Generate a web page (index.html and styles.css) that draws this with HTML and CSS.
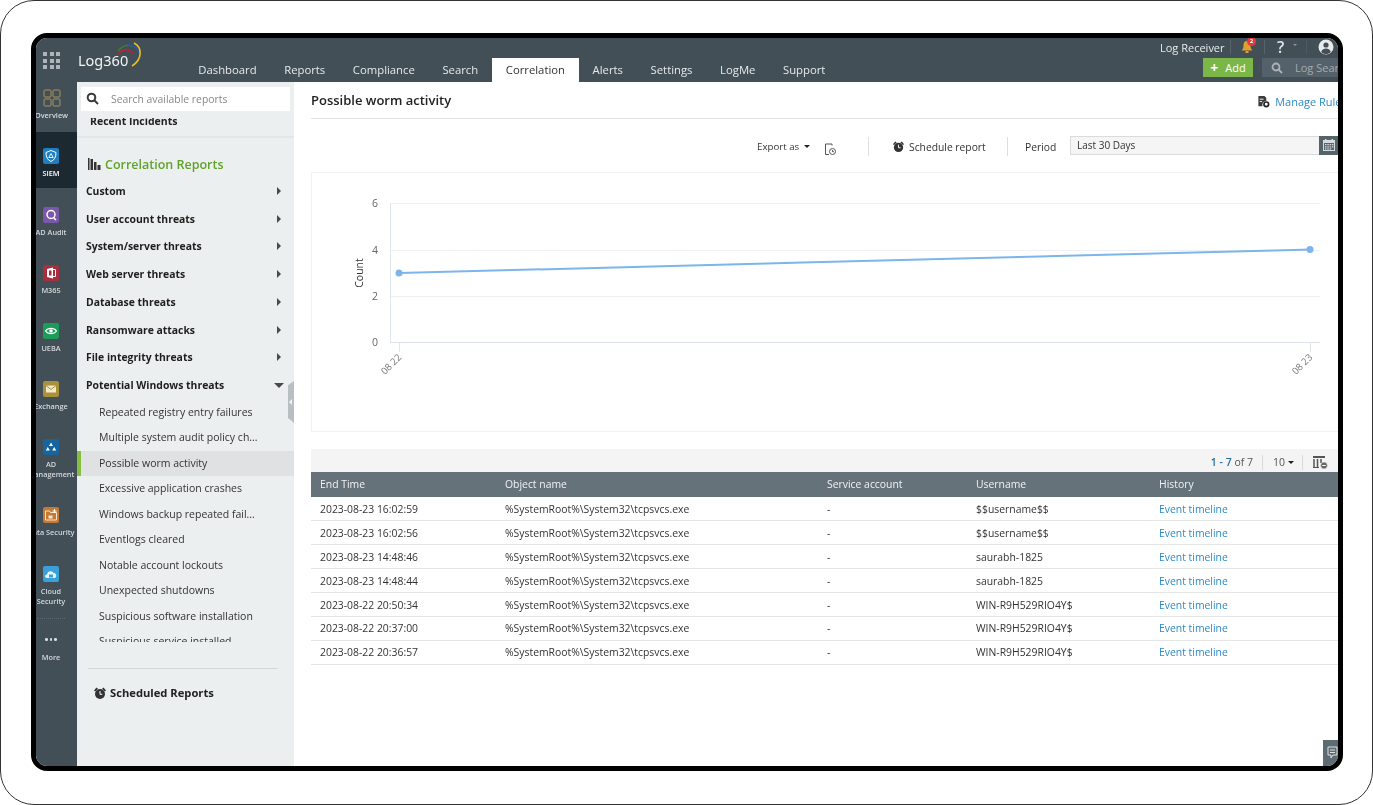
FILE: index.html
```html
<!DOCTYPE html>
<html lang="en">
<head>
<meta charset="utf-8">
<title>Log360 - Possible worm activity</title>
<link rel="stylesheet" href="styles.css">
</head>
<body>
<div class="frame">
  <div class="device">
    <header class="topbar">
      <div class="apps"><i></i><i></i><i></i><i></i><i></i><i></i><i></i><i></i><i></i></div>
      <div class="logo">
        <span class="logo-text">Log360</span>
        <svg class="logo-arcs" viewBox="0 0 30 26" width="30" height="26" fill="none">
          <path d="M2 13C6 7 13 6 19 12" stroke="#c8202c" stroke-width="1.3"/>
          <path d="M3 9C8 3 14 2 20 5" stroke="#2f8a3c" stroke-width="1.3"/>
          <path d="M13 3C18 3 22 6 24 11" stroke="#2a55a8" stroke-width="1.3"/>
          <path d="M19 1C27 5 28 17 17 24" stroke="#e8c020" stroke-width="1.6"/>
        </svg>
      </div>
      <nav class="nav">
        <a>Dashboard</a><a>Reports</a><a>Compliance</a><a>Search</a><a class="active">Correlation</a><a>Alerts</a><a>Settings</a><a>LogMe</a><a>Support</a>
      </nav>
      <div class="top-right">
        <div class="util">
          <span class="receiver">Log Receiver</span>
          <span class="vsep"></span>
          <span class="bell">
            <svg viewBox="0 0 14 14" width="14" height="14"><path d="M7 1C4 1 3.500 3.500 3.500 6C3.500 8.500 2.500 9.500 1.500 10.500H12.500C11.500 9.500 10.500 8.500 10.500 6C10.500 3.500 10 1 7 1Z" fill="#e0a030"/><rect x="5.500" y="11" width="3" height="2" fill="#e0a030"/></svg>
            <b class="badge">2</b>
          </span>
          <span class="vsep"></span>
          <span class="help">?</span>
          <span class="mini-caret"></span>
          <span class="vsep faint"></span>
          <svg class="user" viewBox="0 0 16 16" width="16" height="16"><circle cx="8" cy="8" r="7.500" fill="#e8eaeb"/><circle cx="8" cy="6" r="2.600" fill="#434f57"/><path d="M3.200 13C4 10.200 6 9.500 8 9.500S12 10.200 12.800 13C11.500 14.400 9.800 15 8 15S4.500 14.400 3.200 13Z" fill="#434f57"/></svg>
        </div>
        <div class="actions">
          <button class="add"><span class="plus">+</span>Add</button>
          <div class="logsearch">
            <svg viewBox="0 0 12 12" width="12" height="12" fill="none" stroke="#aab2b7" stroke-width="1.800"><circle cx="5" cy="5" r="3.500"/><path d="M7.500 7.500L11 11"/></svg>
            <span>Log Search</span>
          </div>
        </div>
      </div>
    </header>

    <div class="body">
      <aside class="rail">
        <div class="rail-item first">
          <svg class="ricon" viewBox="0 0 18 18" fill="none" stroke="#a8935f" stroke-width="1"><rect x="1" y="1" width="7" height="7" rx="1"/><rect x="10" y="1" width="7" height="7" rx="1"/><rect x="1" y="10" width="7" height="7" rx="1"/><rect x="10" y="10" width="7" height="7" rx="1"/></svg>
          <span>Overview</span>
        </div>
        <div class="rail-item current">
          <svg class="ricon" viewBox="0 0 16 16"><rect width="16" height="16" rx="2" fill="#1f7fc0"/><path d="M8 2.500L13 4.500C13 9 11.500 12 8 13.500C4.500 12 3 9 3 4.500Z" fill="none" stroke="#fff" stroke-width="1"/><path d="M8 5.500L10.200 9.500H5.800Z" fill="none" stroke="#fff" stroke-width=".9"/></svg>
          <span>SIEM</span>
        </div>
        <div class="rail-item">
          <svg class="ricon" viewBox="0 0 16 16"><rect width="16" height="16" rx="2" fill="#7a57a8"/><circle cx="8" cy="7.500" r="4" fill="none" stroke="#fff" stroke-width="1.500"/><path d="M10.500 10.500L13 13" stroke="#fff" stroke-width="1.500"/></svg>
          <span>AD Audit</span>
        </div>
        <div class="rail-item">
          <svg class="ricon" viewBox="0 0 16 16"><rect width="16" height="16" rx="2" fill="#a82f3e"/><path d="M4 4L10 2.500V13.500L4 12Z" fill="#fff"/><path d="M10 4.500H12.500V11.500H10" fill="none" stroke="#fff"/><rect x="6" y="5.500" width="2.500" height="5" fill="#a82f3e"/></svg>
          <span>M365</span>
        </div>
        <div class="rail-item">
          <svg class="ricon" viewBox="0 0 16 16"><rect width="16" height="16" rx="2" fill="#1c9c58"/><path d="M2.500 8C5 4.500 11 4.500 13.500 8C11 11.500 5 11.500 2.500 8Z" fill="none" stroke="#fff" stroke-width="1.100"/><circle cx="8" cy="8" r="1.800" fill="#fff"/></svg>
          <span>UEBA</span>
        </div>
        <div class="rail-item">
          <svg class="ricon" viewBox="0 0 16 16"><rect width="16" height="16" rx="2" fill="#a8913a"/><rect x="3" y="4.500" width="10" height="7" fill="#f1e9c8"/><path d="M3 4.500L8 8.500L13 4.500" fill="none" stroke="#a8913a"/></svg>
          <span>Exchange</span>
        </div>
        <div class="rail-item tall">
          <svg class="ricon" viewBox="0 0 16 16"><rect width="16" height="16" rx="2" fill="#17659c"/><path d="M8 3.500L10 7H6ZM4.800 8L6.800 11.500H2.800ZM11.200 8L13.200 11.500H9.200Z" fill="#fff"/></svg>
          <span>AD<br>Management</span>
        </div>
        <div class="rail-item data">
          <svg class="ricon" viewBox="0 0 16 16"><rect width="16" height="16" rx="2" fill="#c47a35"/><path d="M2.500 4H6.500L7.500 5.500H13.500V13H2.500Z" fill="none" stroke="#f6e3cc"/><rect x="5.500" y="8.500" width="4" height="3" fill="#f6e3cc"/><path d="M11.500 2V6M9.500 4H13.500" stroke="#fff"/></svg>
          <span>Data Security</span>
        </div>
        <div class="rail-item tall">
          <svg class="ricon" viewBox="0 0 16 16"><rect width="16" height="16" rx="2" fill="#3b9fd8"/><path d="M4 12C1.500 12 1.500 8.500 4 8.500C4.300 5 9 4 10.500 7C13.500 6.500 14.500 12 11.500 12Z" fill="#e6f4fc"/><rect x="6" y="8.500" width="4" height="3" fill="#3b9fd8"/></svg>
          <span>Cloud<br>Security</span>
        </div>
        <div class="rail-item more">
          <div class="dots"><i></i><i></i><i></i></div>
          <span>More</span>
        </div>
      </aside>

      <aside class="side">
        <div class="side-search">
          <svg viewBox="0 0 14 14" width="14" height="14" fill="none" stroke="#3a3a3a" stroke-width="2"><circle cx="5.500" cy="5.500" r="3.800"/><path d="M8.500 8.500L12 12"/></svg>
          <span>Search available reports</span>
        </div>
        <div class="side-scroll">
          <div class="recent">Recent Incidents</div>
          <h3 class="side-title">
            <svg viewBox="0 0 13 12" width="13" height="12" fill="#333"><rect x="0" y="0" width="1.500" height="12"/><rect x="2.500" y="1" width="2.500" height="11"/><rect x="6" y="4" width="2.500" height="8"/><rect x="9.500" y="7" width="3" height="5"/></svg>
            Correlation Reports
          </h3>
          <ul class="groups">
            <li>Custom</li>
            <li>User account threats</li>
            <li>System/server threats</li>
            <li>Web server threats</li>
            <li>Database threats</li>
            <li>Ransomware attacks</li>
            <li>File integrity threats</li>
            <li class="open">Potential Windows threats</li>
          </ul>
          <ul class="reports">
            <li>Repeated registry entry failures</li>
            <li>Multiple system audit policy ch...</li>
            <li class="selected">Possible worm activity</li>
            <li>Excessive application crashes</li>
            <li>Windows backup repeated fail...</li>
            <li>Eventlogs cleared</li>
            <li>Notable account lockouts</li>
            <li>Unexpected shutdowns</li>
            <li>Suspicious software installation</li>
            <li>Suspicious service installed</li>
          </ul>
        </div>
        <div class="scheduled">
          <svg viewBox="0 0 14 14" width="14" height="14"><use href="#alarm"/></svg>
          Scheduled Reports
        </div>
        <span class="handle"></span>
      </aside>

      <main class="main">
        <div class="title-row">
          <h1>Possible worm activity</h1>
          <a class="manage">
            <svg viewBox="0 0 14 14" width="13" height="13"><path d="M1.500 1H8L10 3V6.500A4 4 0 0 0 6 12H1.500Z" fill="#3c3c3c"/><rect x="3" y="4" width="4" height="1" fill="#fff"/><rect x="3" y="6.500" width="2.500" height="1" fill="#fff"/><circle cx="10" cy="10" r="2.500" fill="none" stroke="#222" stroke-width="1.800"/></svg>
            Manage Rules
          </a>
        </div>
        <div class="tools">
          <span class="export">Export as<i class="caret"></i></span>
          <svg class="history" viewBox="0 0 13 13" width="13" height="13" fill="none" stroke="#555"><path d="M8 2.500V1H1.500V11.500H5"/><circle cx="8.500" cy="8.500" r="3"/><path d="M8.500 7V8.700H10"/></svg>
          <span class="tsep"></span>
          <span class="sched">
            <svg viewBox="0 0 14 14" width="13" height="13"><use href="#alarm"/></svg>
            Schedule report
          </span>
          <span class="tsep"></span>
          <span class="period">Period</span>
          <div class="period-box">
            <span>Last 30 Days</span>
            <span class="cal">
              <svg viewBox="0 0 14 14" width="14" height="14" fill="#d6dbde"><rect x="1" y="2" width="12" height="11"/><rect x="3" y="1" width="1.500" height="2.500"/><rect x="9.500" y="1" width="1.500" height="2.500"/><path d="M2 5H12V12H2Z" fill="#55636b"/><path d="M3 6h1.500v1.300H3zM5.300 6h1.500v1.300H5.300zM7.600 6h1.500v1.300H7.600zM9.900 6h1.500v1.300H9.900zM3 8.200h1.500v1.300H3zM5.300 8.200h1.500v1.300H5.300zM7.600 8.200h1.500v1.300H7.600zM9.900 8.200h1.500v1.300H9.900zM3 10.300h1.500v1.300H3zM5.300 10.300h1.500v1.300H5.300zM7.600 10.300h1.500v1.300H7.600z"/></svg>
            </span>
          </div>
        </div>

        <section class="chart">
          <svg viewBox="311 172 1040 259" width="1040" height="259">
            <g stroke="#eef0f3" stroke-width="1">
              <path d="M390 203.500H1320M390 250.500H1320M390 296.500H1320"/>
            </g>
            <path d="M390.500 203V342" stroke="#dfe6ef" stroke-width="1"/>
            <path d="M390 342.500H1320" stroke="#dde2e9" stroke-width="1"/>
            <path d="M399.500 343V352M1310.500 343V352" stroke="#dfe6ef"/>
            <path d="M399 273L1310 249.500" stroke="#7cb5ec" stroke-width="2" fill="none"/>
            <circle cx="399" cy="273" r="3.500" fill="#7cb5ec"/>
            <circle cx="1310" cy="249.500" r="3.500" fill="#7cb5ec"/>
            <g class="ylabels">
              <text x="378" y="207">6</text>
              <text x="378" y="254">4</text>
              <text x="378" y="300">2</text>
              <text x="378" y="346">0</text>
            </g>
            <text class="ytitle" transform="translate(363 273) rotate(-90)">Count</text>
            <text class="xlabel" transform="translate(402 358) rotate(-45)">08 22</text>
            <text class="xlabel" transform="translate(1313 358) rotate(-45)">08 23</text>
          </svg>
        </section>

        <div class="pager">
          <span class="count"><b>1 - 7</b> of 7</span>
          <span class="psep first"></span>
          <span class="size">10<i class="caret"></i></span>
          <span class="psep last"></span>
          <svg viewBox="0 0 15 13" width="15" height="13"><rect x="0" y="0" width="12" height="2" fill="#555"/><path d="M1 3V11M4.500 3V11M8 3V7" stroke="#555" stroke-width="1.500"/><path d="M0 11.500H6" stroke="#555"/><circle cx="11" cy="9.500" r="3.400" fill="#666" stroke="#f4f4f4" stroke-width=".6"/><path d="M9.300 9.500H12.700" stroke="#fff"/></svg>
        </div>

        <table class="grid">
          <colgroup><col class="c1"><col class="c2"><col class="c3"><col class="c4"><col class="c5"></colgroup>
          <thead>
            <tr><th>End Time</th><th>Object name</th><th>Service account</th><th>Username</th><th>History</th></tr>
          </thead>
          <tbody>
            <tr><td>2023-08-23 16:02:59</td><td>%SystemRoot%\System32\tcpsvcs.exe</td><td>-</td><td>$$username$$</td><td><a>Event timeline</a></td></tr>
            <tr><td>2023-08-23 16:02:56</td><td>%SystemRoot%\System32\tcpsvcs.exe</td><td>-</td><td>$$username$$</td><td><a>Event timeline</a></td></tr>
            <tr><td>2023-08-23 14:48:46</td><td>%SystemRoot%\System32\tcpsvcs.exe</td><td>-</td><td>saurabh-1825</td><td><a>Event timeline</a></td></tr>
            <tr><td>2023-08-23 14:48:44</td><td>%SystemRoot%\System32\tcpsvcs.exe</td><td>-</td><td>saurabh-1825</td><td><a>Event timeline</a></td></tr>
            <tr><td>2023-08-22 20:50:34</td><td>%SystemRoot%\System32\tcpsvcs.exe</td><td>-</td><td>WIN-R9H529RIO4Y$</td><td><a>Event timeline</a></td></tr>
            <tr><td>2023-08-22 20:37:00</td><td>%SystemRoot%\System32\tcpsvcs.exe</td><td>-</td><td>WIN-R9H529RIO4Y$</td><td><a>Event timeline</a></td></tr>
            <tr><td>2023-08-22 20:36:57</td><td>%SystemRoot%\System32\tcpsvcs.exe</td><td>-</td><td>WIN-R9H529RIO4Y$</td><td><a>Event timeline</a></td></tr>
          </tbody>
        </table>

        <div class="feedback">
          <svg viewBox="0 0 12 14" width="12" height="14" fill="none" stroke="#dfe3e5"><path d="M1 1H10V9H6L4 12V9H1Z"/><path d="M3 4H8M3 6.500H8"/></svg>
        </div>
      </main>
    </div>
  </div>
</div>
<svg class="defs" width="0" height="0">
  <symbol id="alarm" viewBox="0 0 14 14">
    <circle cx="7" cy="8" r="5" fill="#333"/>
    <path d="M1 4.500L3.500 1.500L5 2.800L2.200 5.500ZM13 4.500L10.500 1.500L9 2.800L11.800 5.500Z" fill="#333"/>
    <path d="M7 5V8.300H9.300" fill="none" stroke="#fff"/>
  </symbol>
</svg>
</body>
</html>
```
FILE: styles.css
```css
* { box-sizing: border-box; }
html, body { margin: 0; padding: 0; }
body {
  width: 1373px;
  height: 805px;
  overflow: hidden;
  background: #fff;
  font-family: "Open Sans", "Liberation Sans", sans-serif;
  color: #222;
}
.defs { position: absolute; }
.frame {
  width: 1373px;
  height: 805px;
  border: 1px solid #333;
  border-radius: 34px;
  padding: 32px 29px 33px 30px;
}
.device {
  width: 1312px;
  height: 738px;
  border: 5px solid #000;
  border-radius: 16px;
  overflow: hidden;
  display: flex;
  flex-direction: column;
  background: #fff;
  filter: blur(0.3px);
}

/* top bar */
.topbar {
  height: 44px;
  flex: none;
  background: #434f57;
  display: flex;
  position: relative;
}
.apps {
  width: 17px;
  height: 17px;
  margin: 14px 0 0 7px;
  display: grid;
  grid-template-columns: repeat(3, 4px);
  grid-template-rows: repeat(3, 4px);
  gap: 2.5px;
}
.apps i { background: #aeb5ba; }
.logo {
  width: 117px;
  margin-left: 18px;
  flex: none;
  position: relative;
  padding-top: 11px;
}
.logo-text { color: #f2f4f5; font-size: 14.500px; line-height: 20px; font-family: "Noto Sans", sans-serif; }
.logo-arcs { position: absolute; left: 37px; top: 4px; }
.nav {
  display: flex;
  align-items: flex-end;
  height: 44px;
  margin-left: -10.500px;
}
.nav a {
  height: 24px;
  padding: 0 13.800px;
  color: #e6e9ea;
  font-size: 11.300px;
  line-height: 24px;
  white-space: nowrap;
}
.nav a.active { background: #fff; color: #333; }
.top-right {
  margin-left: auto;
  width: 198px;
  flex: none;
  display: flex;
  flex-direction: column;
}
.util {
  height: 18px;
  display: flex;
  align-items: center;
  color: #e8eaeb;
  font-size: 11px;
}
.receiver { margin-left: 20px; white-space: nowrap; width: 61px; }
.vsep { width: 1px; height: 14px; background: #58646c; margin-left: 9px; }
.vsep.faint { margin-left: 9px; background: #4e5a62; }
.bell { position: relative; margin-left: 9px; width: 15px; height: 14px; }
.badge {
  position: absolute;
  left: 7px;
  top: -3px;
  width: 9px;
  height: 9px;
  border-radius: 50%;
  background: #e8383c;
  color: #fff;
  font-size: 6px;
  line-height: 9px;
  text-align: center;
}
.help { margin-left: 12px; font-size: 16px; font-weight: 600; width: 9px; color: #dfe3e5; }
.mini-caret {
  width: 0; height: 0;
  margin: -3px 0 0 7px;
  border: 2px solid transparent;
  border-top-color: #8d979d;
}
.user { margin-left: 11px; flex: none; }
.actions { display: flex; height: 19px; margin-top: 2px; }
.add {
  margin: 0 0 0 63px;
  width: 50px;
  height: 19px;
  border: 0;
  padding: 0;
  background: #7ab648;
  color: #fff;
  font: 11px "Open Sans", sans-serif;
}
.plus { font-size: 14px; font-weight: 700; margin-right: 7px; line-height: 14px; vertical-align: -1px; }
.logsearch {
  margin-left: 9px;
  flex: 1;
  min-width: 0;
  background: #55616a;
  display: flex;
  align-items: center;
  padding-left: 9px;
  gap: 12px;
  color: #a3abb0;
  font-size: 11px;
  white-space: nowrap;
  overflow: hidden;
}
.logsearch svg { flex: none; }

/* body */
.body { flex: 1; display: flex; min-height: 0; }

/* rail */
.rail {
  width: 41px;
  flex: none;
  background: #434f57;
  overflow: hidden;
  display: flex;
  flex-direction: column;
}
.rail-item {
  height: 58px;
  flex: none;
  padding: 19px 11px 0 0;
  display: flex;
  flex-direction: column;
  align-items: center;
  gap: 4px;
}
.rail-item span {
  font-size: 7.300px;
  font-weight: 600;
  line-height: 10px;
  color: #d3d8db;
  white-space: nowrap;
  text-align: center;
}
.rail-item.first { height: 50px; padding: 7px 10px 0 0; gap: 3px; }
.rail-item.first .ricon { width: 18px; height: 18px; }
.rail-item.current { background: #1d2931; height: 56px; padding-top: 16px; }
.rail-item.current span { color: #fff; }
.rail-item.data { height: 59px; }
.rail-item.tall { height: 68px; }
.ricon { width: 16px; height: 16px; flex: none; display: block; }
.rail-item.more { padding-top: 3px; gap: 0; height: auto; }
.rail-item.more::before {
  content: "";
  width: 28px;
  height: 1px;
  border-top: 1px dotted #5c6870;
  margin-bottom: 18px;
}
.dots { display: flex; gap: 2px; height: 3px; margin-bottom: 11px; }
.dots i { width: 2.500px; height: 2.500px; border-radius: 50%; background: #d8dcde; }

/* sidebar */
.side {
  width: 217px;
  flex: none;
  background: #ecefef;
  display: flex;
  flex-direction: column;
  position: relative;
}
.side-search {
  margin: 5px 4px 0;
  height: 24px;
  flex: none;
  background: #fff;
  display: flex;
  align-items: center;
  padding-left: 5px;
  gap: 11px;
  color: #888;
  font-size: 10.400px;
}
.side-scroll {
  margin-top: 7px;
  height: 524px;
  flex: none;
  overflow: hidden;
}
.recent {
  margin-top: -3.500px;
  padding: 0 0 9px 13px;
  height: 23px;
  font-size: 10.500px;
  font-weight: 700;
  line-height: 12px;
  color: #222;
  border-bottom: 2px solid #e3e6e6;
}
.side-title {
  margin: 17.500px 0 0 11px;
  height: 18px;
  display: flex;
  align-items: center;
  gap: 4px;
  color: #5fa32b;
  font-size: 12.500px;
  font-weight: 600;
  white-space: nowrap;
}
.groups { list-style: none; margin: 5px 0 0; padding: 0; }
.groups li {
  height: 27.730px;
  line-height: 27px;
  padding-left: 9px;
  font-size: 10.400px;
  font-weight: 700;
  color: #1e1e1e;
  position: relative;
}
.groups li::after {
  content: "";
  position: absolute;
  left: 200px;
  top: 9px;
  border: 4px solid transparent;
  border-left-color: #4a4a4a;
  border-right-width: 0;
}
.groups li.open::after {
  left: 197px;
  top: 11px;
  border: 5px solid transparent;
  border-top-color: #4a4a4a;
  border-bottom-width: 0;
}
.reports { list-style: none; margin: 0; padding: 0; }
.reports li {
  height: 25.500px;
  line-height: 25px;
  padding-left: 22px;
  font-size: 10.500px;
  color: #333;
  white-space: nowrap;
}
.reports li.selected {
  background: #e0e1e2;
  border-left: 4px solid #86bf3f;
  padding-left: 18px;
}
.scheduled {
  margin: 26px 16px 0 11px;
  padding: 16px 0 0 5px;
  border-top: 1px solid #d4d7d8;
  display: flex;
  align-items: center;
  gap: 3px;
  font-size: 11.200px;
  font-weight: 700;
  color: #222;
  white-space: nowrap;
}
.handle {
  position: absolute;
  right: 0;
  top: 299px;
  width: 6px;
  height: 42px;
  background: #b8bfc3;
  clip-path: polygon(100% 0, 100% 100%, 0 88%, 0 10%);
}
.handle::after {
  content: "";
  position: absolute;
  left: 1px;
  top: 18px;
  border: 3px solid transparent;
  border-right-color: #f2f3f4;
  border-left-width: 0;
}

/* main */
.main {
  flex: 1;
  min-width: 0;
  overflow: hidden;
  position: relative;
  padding-left: 17px;
}
.title-row {
  width: 1040px;
  height: 37px;
  border-bottom: 1px solid #e2e4e5;
  display: flex;
  align-items: flex-start;
  padding-top: 8px;
}
.title-row h1 {
  margin: 0;
  font-size: 13px;
  line-height: 20px;
  font-weight: 600;
  color: #222;
}
.manage {
  margin-left: 806px;
  display: flex;
  align-items: center;
  gap: 5px;
  font-size: 11px;
  line-height: 23px;
  color: #2d8ac7;
  white-space: nowrap;
}
.tools {
  height: 53px;
  padding-top: 2px;
  display: flex;
  align-items: center;
  padding-left: 446px;
  font-size: 10.300px;
  color: #333;
  width: 1027px;
  white-space: nowrap;
}
.caret {
  display: inline-block;
  margin-left: 5px;
  vertical-align: 2px;
  border: 3.500px solid transparent;
  border-top-color: #222;
  border-bottom-width: 0;
}
.export { width: 53px; font-size: 9.700px; }
.history { margin-left: 14px; margin-top: 5px; }
.tsep { width: 1px; height: 19px; background: #dcdfe0; margin-left: 31px; }
.sched { margin-left: 23px; display: flex; align-items: center; gap: 4px; width: 106px; }
.sched + .tsep { margin-left: 9px; }
.period { margin-left: 17px; width: 45px; }
.period-box {
  width: 268px;
  height: 19px;
  margin-top: -3px;
  display: flex;
  align-items: center;
  justify-content: space-between;
  background: #f5f5f5;
  border: 1px solid #d9dbdc;
  border-width: 1px 0 1px 1px;
  padding-left: 6px;
  font-size: 10px;
}
.cal {
  width: 19px;
  height: 19px;
  background: #55636b;
  display: flex;
  align-items: center;
  justify-content: center;
}
.chart {
  width: 1040px;
  height: 260px;
  border: 1px solid #f1f2f3;
  overflow: hidden;
}
.chart svg { display: block; margin: -1px 0 0 -1px; }
.ylabels text { font: 10.500px "Open Sans", sans-serif; fill: #666; text-anchor: end; }
.ytitle { font: 10.500px "Open Sans", sans-serif; fill: #333; text-anchor: middle; }
.xlabel { font: 9.500px "Open Sans", sans-serif; fill: #777; text-anchor: end; }
.pager {
  margin-top: 17px;
  width: 1027px;
  height: 23px;
  background: #f4f4f4;
  display: flex;
  justify-content: flex-end;
  align-items: center;
  padding-right: 10px;
  padding-top: 3px;
  font-size: 10.500px;
  color: #555;
}
.count b { font-weight: 600; color: #2b6f9e; }
.psep { width: 1px; height: 15px; background: #d8dadb; }
.psep.first { margin: 0 10px 0 9px; }
.psep.last { margin: 0 10px 0 8px; }
.size .caret { margin-left: 3px; }
.grid {
  width: 1027px;
  table-layout: fixed;
  border-collapse: collapse;
  font-size: 10.400px;
}
.c1 { width: 185px; }
.c2 { width: 322px; }
.c3 { width: 149px; }
.c4 { width: 183px; }
.grid th {
  height: 25px;
  background: #66727a;
  color: #f0f2f3;
  font-weight: 400;
  text-align: left;
  padding: 0 0 2px 9px;
}
.grid td {
  height: 23.900px;
  padding: 0 0 0 9px;
  border-bottom: 1px solid #e3e4e5;
  color: #333;
  white-space: nowrap;
}
.grid a { color: #2d8ac7; }
.feedback {
  position: absolute;
  right: 0;
  bottom: 0;
  width: 15px;
  height: 26px;
  background: #5d6b73;
  display: flex;
  align-items: center;
  padding-left: 4px;
  overflow: hidden;
}
.feedback svg { flex: none; }
```
